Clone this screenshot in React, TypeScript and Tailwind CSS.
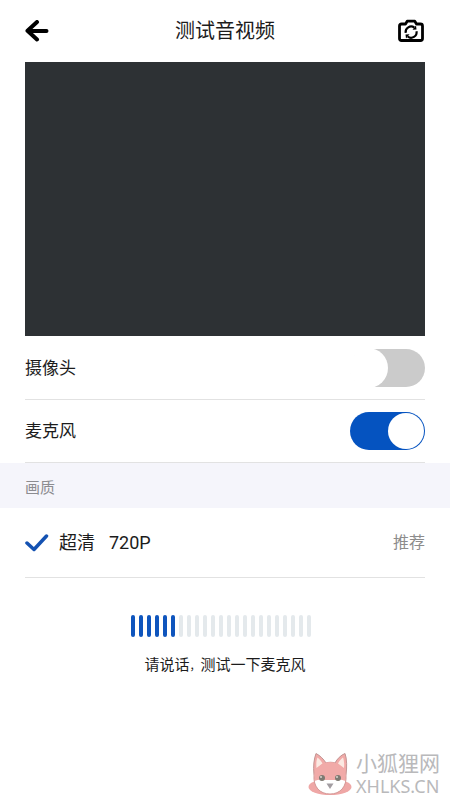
import { useState } from "react";

const BARS = 23;
const LEVEL = 6;

type SwitchRowProps = {
  id: string;
  label: string;
  checked: boolean;
  onChange: (value: boolean) => void;
};

const SwitchRow = ({ id, label, checked, onChange }: SwitchRowProps) => (
  <div className="flex h-[63px] items-center justify-between border-b border-[#e2e2e2]">
    <label htmlFor={id} className="text-[17px] leading-6">
      {label}
    </label>
    <span className="relative flex h-[38px] w-[75px]">
      <input
        id={id}
        type="checkbox"
        role="switch"
        checked={checked}
        onChange={(e) => onChange(e.target.checked)}
        className="peer h-full w-full cursor-pointer appearance-none rounded-full bg-[#cbcbcb] checked:bg-[#0553c0]"
      />
      <span className="pointer-events-none absolute top-0 -left-px size-[38px] rounded-full bg-white ring-1 ring-white peer-checked:top-px peer-checked:left-[38px] peer-checked:size-9 peer-checked:ring-0" />
    </span>
  </div>
);

const FoxLogo = () => (
  <svg width="44" height="44" viewBox="0 0 44 44" aria-hidden="true">
    <ellipse cx="22" cy="35" rx="21.500" ry="8" fill="#efa7a6" />
    <path
      d="M6 23C5 14 6 7 8 1.500c4 2 8 6 10 9.500 3-1 6-1 9 0C29 7 33 3 37 1.500 39 7 39 15 38 23"
      fill="#f1aaa8"
      stroke="#c29593"
      strokeWidth="1"
    />
    <path d="M8.500 16C8 11 8.500 8 9.500 5.500c2.500 2 4 4 5 6zM36 16c.5-4 0-8-1-10.500-2.500 2-4 4-5 6z" fill="#fbe9e2" />
    <circle cx="22" cy="26" r="16" fill="#f1aaa8" />
    <path d="M6.500 29c4-2 9-1 15.500-1s11.500-1 15.500 1c-1 7-7 13-15.500 13S7.500 36 6.500 29z" fill="#fff" />
    <path d="M6 23c-1 12 6 19 16 19s17-7 16-19" fill="none" stroke="#d49b99" strokeWidth="1" />
    <circle cx="14" cy="26" r="3" fill="#7e7a72" />
    <circle cx="30" cy="26" r="3" fill="#7e7a72" />
    <circle cx="13" cy="25" r="1" fill="#d8d6cf" />
    <circle cx="29" cy="25" r="1" fill="#d8d6cf" />
    <path d="M18.500 31.500h7L22 37z" fill="#a29da1" />
  </svg>
);

const App = () => {
  const [camera, setCamera] = useState(false);
  const [mic, setMic] = useState(true);

  return (
    <main className="relative min-h-screen bg-white font-[Roboto,'Noto_Sans_CJK_SC',sans-serif] text-[#1c1c1c]">
      <header className="flex h-[62px] items-center justify-between px-[25px]">
        <button type="button" aria-label="返回" className="w-7">
          <svg width="24" height="22" viewBox="0 0 24 22" fill="none" stroke="#000" strokeWidth="4" strokeLinecap="round" strokeLinejoin="round">
            <path d="M12 2 2.500 10.800 12 19.500M3 11h18.500" />
          </svg>
        </button>
        <h1 className="text-xl leading-7">测试音视频</h1>
        <button type="button" aria-label="切换摄像头" className="w-7">
          <svg width="28" height="24" viewBox="0 0 28 24" fill="none" stroke="#000">
            <path d="M4.500 5h4L10.200 2.200h7.600L19.500 5h4q2 0 2 2v12.500q0 2-2 2h-19q-2 0-2-2V7q0-2 2-2z" strokeWidth="2.800" strokeLinejoin="round" />
            <path d="M8.700 13.800A5.500 5.500 0 0 1 17.300 8.500M19.500 12.200A5.500 5.500 0 0 1 10.700 17.500" strokeWidth="2.200" />
            <path d="m15.500 10.800 4-.3-.5-4zM12.500 15.200l-4 .3.5 4z" fill="#000" stroke="none" />
          </svg>
        </button>
      </header>

      <section className="mx-[25px] h-[274px] bg-[#2d3134]" aria-label="预览" />

      <section className="px-[25px] pt-px">
        <SwitchRow id="camera" label="摄像头" checked={camera} onChange={setCamera} />
        <SwitchRow id="mic" label="麦克风" checked={mic} onChange={setMic} />
      </section>

      <h2 className="flex h-[45px] items-center bg-[#f5f5fb] px-[25px] pt-1.5 text-[15px] text-[#8c8c90]">画质</h2>

      <section className="px-[25px]">
        <button type="button" className="flex h-[70px] w-full items-center border-b border-[#e2e2e2] text-left text-lg">
          <svg width="24" height="18" viewBox="0 0 24 18" fill="none" stroke="#1452b2" strokeWidth="3.500" strokeLinecap="round" strokeLinejoin="round" aria-hidden="true">
            <path d="m2 9 7 6.500L21.500 2" />
          </svg>
          <span className="ml-2.5">超清</span>
          <span className="ml-3.5">720P</span>
          <span className="ml-auto text-base text-[#8c8c8c]">推荐</span>
        </button>
      </section>

      <section className="flex flex-col items-center pt-[37px]">
        <div role="meter" aria-label="麦克风音量" aria-valuemin={0} aria-valuemax={BARS} aria-valuenow={LEVEL} className="mr-2 flex h-[22px] gap-1">
          {Array.from({ length: BARS }, (_, i) => (
            <span key={i} className={i < LEVEL ? "w-1 rounded-full bg-[#0f55bd]" : "w-1 rounded-full bg-[#e4e9ec]"} />
          ))}
        </div>
        <p className="mt-4 text-[15px] leading-6">
          请说话<span className="text-[11px]">，</span>测试一下麦克风
        </p>
      </section>

      <aside className="absolute right-2.5 bottom-1 flex items-center gap-1 text-[#b9b9bb]">
        <FoxLogo />
        <div className="flex flex-col">
          <span className="text-[21px] leading-6">小狐狸网</span>
          <span className="font-['Noto_Sans',sans-serif] text-lg leading-5">XHLKS.CN</span>
        </div>
      </aside>
    </main>
  );
};

export default App;
